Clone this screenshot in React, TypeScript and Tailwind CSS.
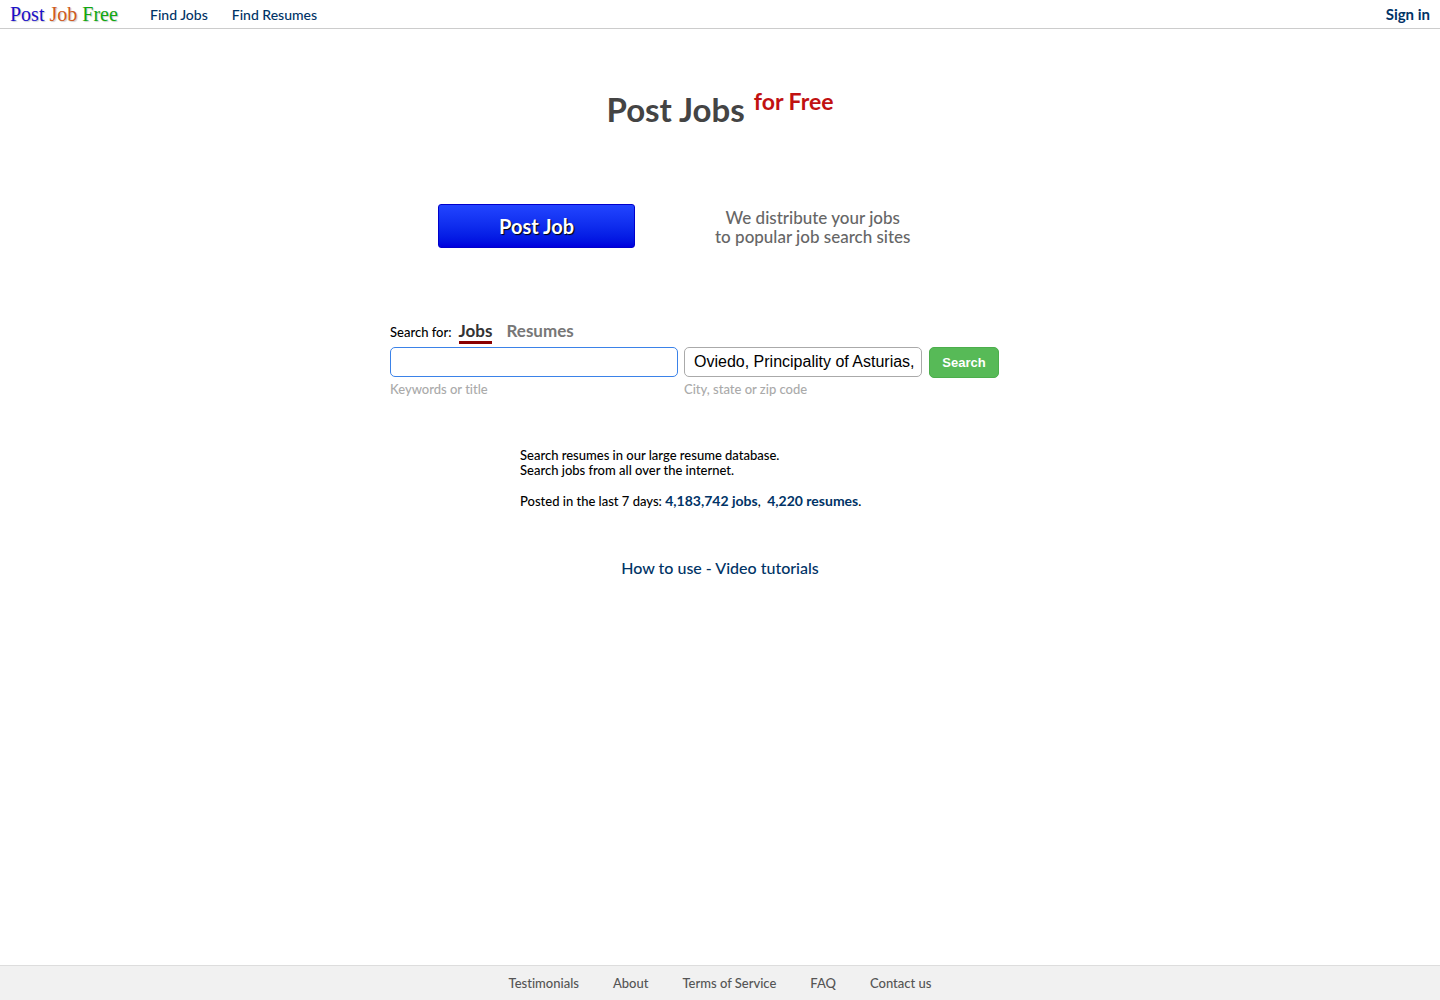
import React, { useState } from 'react';

const footerLinks = ['Testimonials', 'About', 'Terms of Service', 'FAQ', 'Contact us'];

const Header: React.FC = () => (
  <header className="flex h-[29px] items-center border-b border-[#cccccc] px-[10px] text-[14px] leading-[18px] text-[#003366]">
    <a
      href="#"
      className="w-[140px] font-['Liberation_Serif',serif] text-[20px] leading-[24px] font-normal [text-shadow:1px_1px_1px_#cccccc]"
    >
      <span className="text-[#1a10c8]">Post</span> <span className="text-[#d05a20]">Job</span>{' '}
      <span className="text-[#10a810]">Free</span>
    </a>
    <nav className="flex gap-6 pt-[2px]">
      <a href="#">Find Jobs</a>
      <a href="#">Find Resumes</a>
    </nav>
    <a href="#" className="ml-auto text-[15px] font-bold">Sign in</a>
  </header>
);

const SearchForm: React.FC = () => {
  const [tab, setTab] = useState('Jobs');
  const [keywords, setKeywords] = useState('');
  const [location, setLocation] = useState('Oviedo, Principality of Asturias, Spain');

  return (
    <form className="mt-[73px]" onSubmit={(e) => e.preventDefault()}>
      <div className="flex items-baseline text-[13px] leading-[20px]">
        <span className="mr-[7px]">Search for:</span>
        {['Jobs', 'Resumes'].map((name) => (
          <button
            key={name}
            type="button"
            onClick={() => setTab(name)}
            className={`mr-[14px] border-b-[3px] text-[17px] font-bold ${
              tab === name ? 'border-[#8b0000] text-[#333333]' : 'border-transparent text-[#777777]'
            }`}
          >
            {name}
          </button>
        ))}
      </div>
      <div className="mt-[3px] flex items-start text-[13px] leading-[15px] text-[#aaaaaa]">
        <div className="mr-[6px] w-[288px]">
          <input
            id="keywords"
            value={keywords}
            onChange={(e) => setKeywords(e.target.value)}
            className="h-[30px] w-full rounded-[5px] border border-[#3b82e8] px-[9px] font-['Liberation_Sans',sans-serif] text-[16px] font-normal text-black outline-none"
          />
          <label htmlFor="keywords" className="mt-[5px] block">Keywords or title</label>
        </div>
        <div className="mr-[7px] w-[238px]">
          <input
            id="location"
            value={location}
            onChange={(e) => setLocation(e.target.value)}
            className="h-[30px] w-full rounded-[5px] border border-[#aaaaaa] pr-[6px] pl-[9px] font-['Liberation_Sans',sans-serif] text-[16px] font-normal text-black outline-none"
          />
          <label htmlFor="location" className="mt-[5px] block">City, state or zip code</label>
        </div>
        <button
          type="submit"
          className="h-[31px] w-[70px] rounded-[5px] border border-[#4cae4c] bg-[#57ba57] font-['Liberation_Sans',sans-serif] font-bold text-white"
        >
          Search
        </button>
      </div>
    </form>
  );
};

const App: React.FC = () => {
  return (
    <div className="flex min-h-screen flex-col bg-white font-['Lato',sans-serif] font-medium text-black [font-variant-ligatures:none]">
      <Header />
      <main className="mx-auto w-full max-w-[660px] grow">
        <h1 className="mt-[60px] flex justify-center gap-[9px] text-[33px] leading-[40px] font-bold text-[#444444]">
          Post Jobs <span className="text-[23px] leading-[24px] text-[#c11111]">for Free</span>
        </h1>

        <div className="mt-[75px] flex items-center gap-20 pl-12">
          <button
            type="button"
            className="h-[44px] w-[197px] rounded-[3px] border border-[#0000cc] bg-linear-to-b from-[#2244ff] to-[#0000dd] text-[20px] font-bold text-white [text-shadow:1px_1px_1px_#000]"
          >
            Post Job
          </button>
          <p className="pt-[2px] text-center text-[17px] leading-[19px] text-[#666666]">
            We distribute your jobs
            <br />
            to popular job search sites
          </p>
        </div>

        <SearchForm />

        <div className="mx-auto mt-[51px] max-w-[400px] text-[13px] leading-[15px]">
          <p>
            Search resumes in our large resume database.
            <br />
            Search jobs from all over the internet.
          </p>
          <p className="mt-[15px]">
            Posted in the last 7 days:{' '}
            <a href="#" className="text-[14px] font-bold text-[#003366]">4,183,742 jobs</a>,&nbsp;{' '}
            <a href="#" className="text-[14px] font-bold text-[#003366]">4,220 resumes</a>.
          </p>
        </div>

        <p className="mt-[49px] text-center text-[16px] leading-[19px] text-[#003366]">
          <a href="#">How to use - Video tutorials</a>
        </p>
      </main>

      <footer className="flex h-[35px] items-center justify-center gap-[34px] border-t border-[#dddddd] bg-[#f1f1f1] text-[13px] leading-[15px] text-[#555555]">
        {footerLinks.map((link) => (
          <a key={link} href="#">{link}</a>
        ))}
      </footer>
    </div>
  );
};

export default App;
